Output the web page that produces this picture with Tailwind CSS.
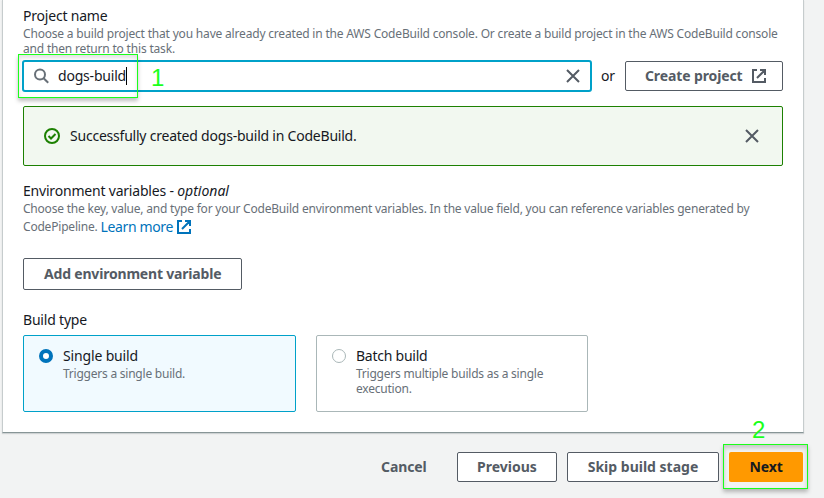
<!DOCTYPE html>
<html lang="en">
<head>
<meta charset="utf-8">
<title>Add build stage</title>
<script src="https://cdn.jsdelivr.net/npm/@tailwindcss/browser@4"></script>
</head>
<body class="relative h-[498px] w-[824px] overflow-hidden bg-[#f2f3f3] font-['Noto_Sans','Open_Sans',sans-serif] text-[14px] leading-5 text-[#16191f]">
<main class="ml-[2px] h-[433px] w-[802px] border-x border-b border-x-[#c6cccd] border-b-[#879596] bg-white pl-5 pr-5 pt-[6px] shadow-[0_1px_1px_0_rgba(0,28,36,0.15)]">
  <section>
    <h2 class="h-5 whitespace-nowrap"><span class="tracking-[-0.2px]">Project name</span></h2>
    <p class="h-[34px] whitespace-nowrap text-[12px] leading-[15px] tracking-[-0.185px] text-[#687078]"><span>Choose a build project that you have already created in the AWS CodeBuild console. Or create a build project in the AWS CodeBuild console</span><br><span>and then return to this task.</span></p>
    <div class="flex h-8 items-center">
      <div class="-ml-px flex h-8 w-[570px] items-center rounded-[3px] border-2 border-[#00a1c9] bg-white pl-[9px] pr-[9px]">
        <svg class="h-4 w-4 shrink-0" viewBox="0 0 16 16" fill="none" stroke="#687078" stroke-width="2"><circle cx="7" cy="6.6" r="5"/><path d="M10.6 10.2l4.6 4.6"/></svg>
        <span class="ml-[9px] whitespace-nowrap tracking-[-0.2px]">dogs-build</span><span class="h-[18px] w-px bg-black"></span>
        <svg class="ml-auto h-4 w-4 shrink-0" viewBox="0 0 16 16" fill="none" stroke="#545b64" stroke-width="2"><path d="M2 2l12 12M14 2L2 14"/></svg>
      </div>
      <span class="ml-[9px] w-6 tracking-[-0.1px]">or</span>
      <button class="flex h-[30px] w-[158px] items-center rounded-[2px] border border-[#545b64] bg-white pl-[19px] pr-[15px] font-bold text-[#545b64]"><span class="whitespace-nowrap tracking-[-0.12px]">Create project</span>
        <svg class="ml-auto h-4 w-4 shrink-0" viewBox="0 0 16 16" fill="none" stroke="#545b64" stroke-width="2"><path d="M6 2H2v12h12v-4M9 2h5v5M14 2L6 10"/></svg></button>
    </div>
  </section>
  <section class="mt-[14px] flex h-[60px] items-center rounded-[2px] border border-[#1d8102] bg-[#f2f8f0] pl-5 pr-[22px]">
    <svg class="h-4 w-4 shrink-0" viewBox="0 0 16 16" fill="none" stroke="#1d8102" stroke-width="2"><circle cx="8" cy="8" r="7"/><path d="M4.5 8l2.5 2.5L11.5 6"/></svg>
    <span class="ml-[10px] whitespace-nowrap tracking-[-0.22px]">Successfully created dogs-build in CodeBuild.</span>
    <svg class="ml-auto h-4 w-4" viewBox="0 0 16 16" fill="none" stroke="#545b64" stroke-width="2"><path d="M2 2l12 12M14 2L2 14"/></svg>
  </section>
  <section class="mt-[15px]">
    <h2 class="h-5 whitespace-nowrap"><span class="tracking-[-0.2px]">Environment variables - </span><em>optional</em></h2>
    <p class="h-4 whitespace-nowrap text-[12px] leading-4 text-[#687078]"><span class="tracking-[-0.213px]">Choose the key, value, and type for your CodeBuild environment variables. In the value field, you can reference variables generated by</span></p>
    <p class="flex h-5 items-center whitespace-nowrap text-[12px] text-[#687078]"><span class="tracking-[-0.2px]">CodePipeline.</span><a class="ml-[3px] text-[14px] tracking-[-0.36px] text-[#0073bb]">Learn more</a>
      <svg class="ml-[3px] h-4 w-4" viewBox="0 0 16 16" fill="none" stroke="#0073bb" stroke-width="2"><path d="M6 2H2v12h12v-4M9 2h5v5M14 2L6 10"/></svg></p>
    <button class="mt-[21px] flex h-8 w-[219px] items-center rounded-[2px] border border-[#545b64] pl-5 font-bold text-[#545b64]"><span class="whitespace-nowrap tracking-[-0.19px]">Add environment variable</span></button>
  </section>
  <section class="mt-5">
    <h2 class="h-[25px]"><span class="tracking-[-0.2px]">Build type</span></h2>
    <div class="flex gap-5">
      <label class="flex h-[77px] w-[273px] rounded-[2px] border border-[#00a1c9] bg-[#f1faff] pl-[15px] pt-[10px]">
        <i class="mt-[3px] h-[14px] w-[14px] shrink-0 rounded-full border-4 border-[#0073bb] bg-white"></i>
        <span class="ml-[10px] whitespace-nowrap"><span class="block h-5 tracking-[-0.15px]">Single build</span><span class="block text-[12px] leading-[15px] tracking-[-0.23px] text-[#687078]">Triggers a single build.</span></span>
      </label>
      <label class="flex h-[77px] w-[272px] rounded-[2px] border border-[#aab7b8] bg-white pl-[15px] pt-[10px]">
        <i class="mt-[3px] h-[14px] w-[14px] shrink-0 rounded-full border border-[#aab7b8] bg-white"></i>
        <span class="ml-[10px] whitespace-nowrap"><span class="block h-5 tracking-[-0.25px]">Batch build</span><span class="block text-[12px] leading-[15px] tracking-[-0.22px] text-[#687078]">Triggers multiple builds as a single<br>execution.</span></span>
      </label>
    </div>
  </section>
</main>
<footer class="mt-[19px] flex h-[30px] items-center font-bold text-[#545b64]">
  <button class="ml-[381px] w-[76px] whitespace-nowrap text-left tracking-[-0.1px]">Cancel</button>
  <button class="h-[30px] w-[100px] whitespace-nowrap rounded-[2px] border border-[#545b64] bg-white">Previous</button>
  <button class="ml-[10px] h-[30px] w-[152px] whitespace-nowrap rounded-[2px] border border-[#545b64] bg-white">Skip build stage</button>
  <button class="ml-[10px] h-[30px] w-[74px] whitespace-nowrap rounded-[2px] bg-[#ff9900] tracking-[-0.1px] text-[#16191f]">Next</button>
</footer>
<div class="absolute left-[18px] top-[54px] h-[44px] w-[120px] border border-[#1aff1a] shadow-[0_3px_4px_rgba(0,0,0,0.25),inset_0_3px_4px_rgba(0,0,0,0.12)]"></div>
<div class="absolute left-[723px] top-[444px] h-[45px] w-[85px] border border-[#1aff1a] shadow-[0_3px_4px_rgba(0,0,0,0.25),inset_0_3px_4px_rgba(0,0,0,0.18)]"></div>
<span class="absolute left-[151px] top-[66px] font-['Liberation_Sans',sans-serif] text-[24px] leading-6 text-[#1aff1a]">1</span>
<span class="absolute left-[752px] top-[418px] font-['Liberation_Sans',sans-serif] text-[24px] leading-6 text-[#1aff1a]">2</span>
</body>
</html>
